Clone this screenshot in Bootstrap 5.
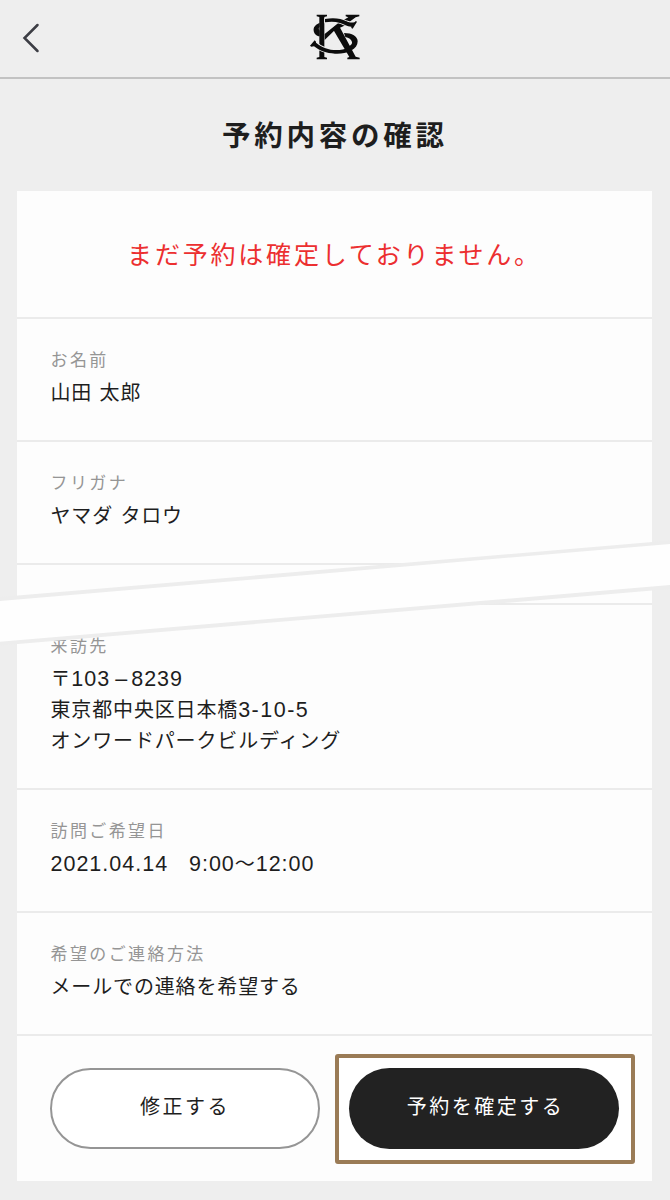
<!DOCTYPE html>
<html lang="ja">
<head>
<meta charset="utf-8">
<meta name="viewport" content="width=device-width, initial-scale=1">
<title>予約内容の確認</title>
<link href="https://cdn.jsdelivr.net/npm/bootstrap@5.3.0/dist/css/bootstrap.min.css" rel="stylesheet">
<style>
body{background:#eee;color:#1e1e1e;font-family:"Noto Sans CJK JP",sans-serif}
.page{height:1200px;overflow:hidden}
.topbar{height:79px;border-bottom:2px solid #c2c2c2;padding:0 22px}
.topbar .side{width:60px}
.title{height:111.5px;font-size:28.5px;font-weight:600;letter-spacing:3.75px;padding-bottom:1px}
.sheet{background:#fdfdfd;margin:0 18px 0 17px;height:990.5px}
.notice{height:126px;color:#ec2f30;font-size:25px;font-weight:400;letter-spacing:2.8px}
.item{border-top:2px solid #ebebeb;padding:28px 33.5px 33px;font-size:20px;line-height:31px;letter-spacing:.85px;word-spacing:2px}
.item dt{font-size:17px;line-height:24px;font-weight:400;letter-spacing:2.4px;color:#959595;margin-bottom:5px}
.item dd{margin:0}
.num{font-family:"Liberation Sans",sans-serif;font-size:21.5px;letter-spacing:1px;line-height:1}
.dash{margin:0 4px 0 5px;letter-spacing:0}
.lot{letter-spacing:1.5px}
.cut{height:40.5px;padding:0}
.tear{left:0;top:538px;pointer-events:none}
.actions{border-top:2px solid #ebebeb;padding:18px 17.5px 0 33px}
.pill{height:81px;border-radius:41px;width:270px;font-size:20px;letter-spacing:2.5px;padding:0 0 5px 0}
.pill-line{border:2px solid #959595;background:#fff;color:#1e1e1e;margin-top:14px}
.pill-dark{background:#222;color:#fff;border:0;margin:0 1px 2px 0;padding-left:3px}
.focus-box{border:4px solid #9a7b56;border-radius:3px;background:#fff;width:300px;height:110px}
</style>
</head>
<body>
<div class="page position-relative">
  <header class="topbar d-flex align-items-center justify-content-between">
    <div class="side"><svg width="20" height="34" viewBox="0 0 20 34" class="d-block"><path d="M15.5 3 2.5 16 15.5 29" fill="none" stroke="#3c3d44" stroke-width="2.5" stroke-linecap="round"/></svg></div>
    <svg width="90" height="77" viewBox="0 0 270 231" aria-label="KS">
      <g fill="#0c0c0c">
        <path d="M89 68c-15 7-19 14-18 24 1 9 8 16 18 17V92c-3-4-4-8 0-12z"/>
        <path d="M80 44h31v5l-8 2v120l8 2v5H80v-5l8-2V51l-8-2z"/>
        <path d="M167 44h41v5l-11 3-34 25-29 14-30 29v-18l40-32 31-18-8-3z"/>
        <path d="M162 99c24 0 41 10 41 25 0 12-7 21-18 27l-8-12c7-4 10-8 9-13-2-8-9-12-20-15z"/>
        <g stroke="#eee" stroke-width="5" paint-order="stroke">
          <path d="M105 57c27-5 49-1 63 6 11 5 18 6 27 3l2-3 4 2-13 21-4-2v-4c-13-1-22-7-34-11-15-5-29-5-45-2z"/>
          <path d="M60 137l14-16 4 4v3c18 15 38 22 61 22 14 0 25-2 37-7l5 10c-13 6-28 9-46 8-26-1-46-9-63-22l-8 1z"/>
        </g>
        <path d="M129 88l18-11 50 93 12 3v5h-37v-5l6-2z"/>
      </g>
    </svg>
    <div class="side"></div>
  </header>
  <h1 class="title d-flex align-items-center justify-content-center m-0">予約内容の確認</h1>
  <main class="sheet">
    <p class="notice d-flex align-items-center justify-content-center m-0">まだ予約は確定しておりません。</p>
    <dl class="m-0">
      <div class="item"><dt>お名前</dt><dd>山田 太郎</dd></div>
      <div class="item"><dt>フリガナ</dt><dd>ヤマダ タロウ</dd></div>
      <div class="item cut"></div>
      <div class="item"><dt>来訪先</dt><dd>〒<span class="num">103<span class="dash">–</span>8239</span><br>東京都中央区日本橋<span class="num lot">3-10-5</span><br>オンワードパークビルディング</dd></div>
      <div class="item"><dt>訪問ご希望日</dt><dd><span class="num">2021.04.14</span>　<span class="num">9:00</span>〜<span class="num">12:00</span></dd></div>
      <div class="item"><dt>希望のご連絡方法</dt><dd>メールでの連絡を希望する</dd></div>
    </dl>
    <div class="actions d-flex justify-content-between align-items-start">
      <button type="button" class="btn pill pill-line">修正する</button>
      <div class="focus-box d-flex align-items-center justify-content-center"><button type="button" class="btn pill pill-dark">予約を確定する</button></div>
    </div>
  </main>
  <svg class="tear position-absolute" width="670" height="112" viewBox="0 538 670 112"><path d="M0 597 670 540.5V589L0 645.5z" fill="#ededed"/><path d="M0 601 670 544V585L0 641.7z" fill="#fefefe"/></svg>
</div>
<script src="https://cdn.jsdelivr.net/npm/bootstrap@5.3.0/dist/js/bootstrap.bundle.min.js"></script>
</body>
</html>
